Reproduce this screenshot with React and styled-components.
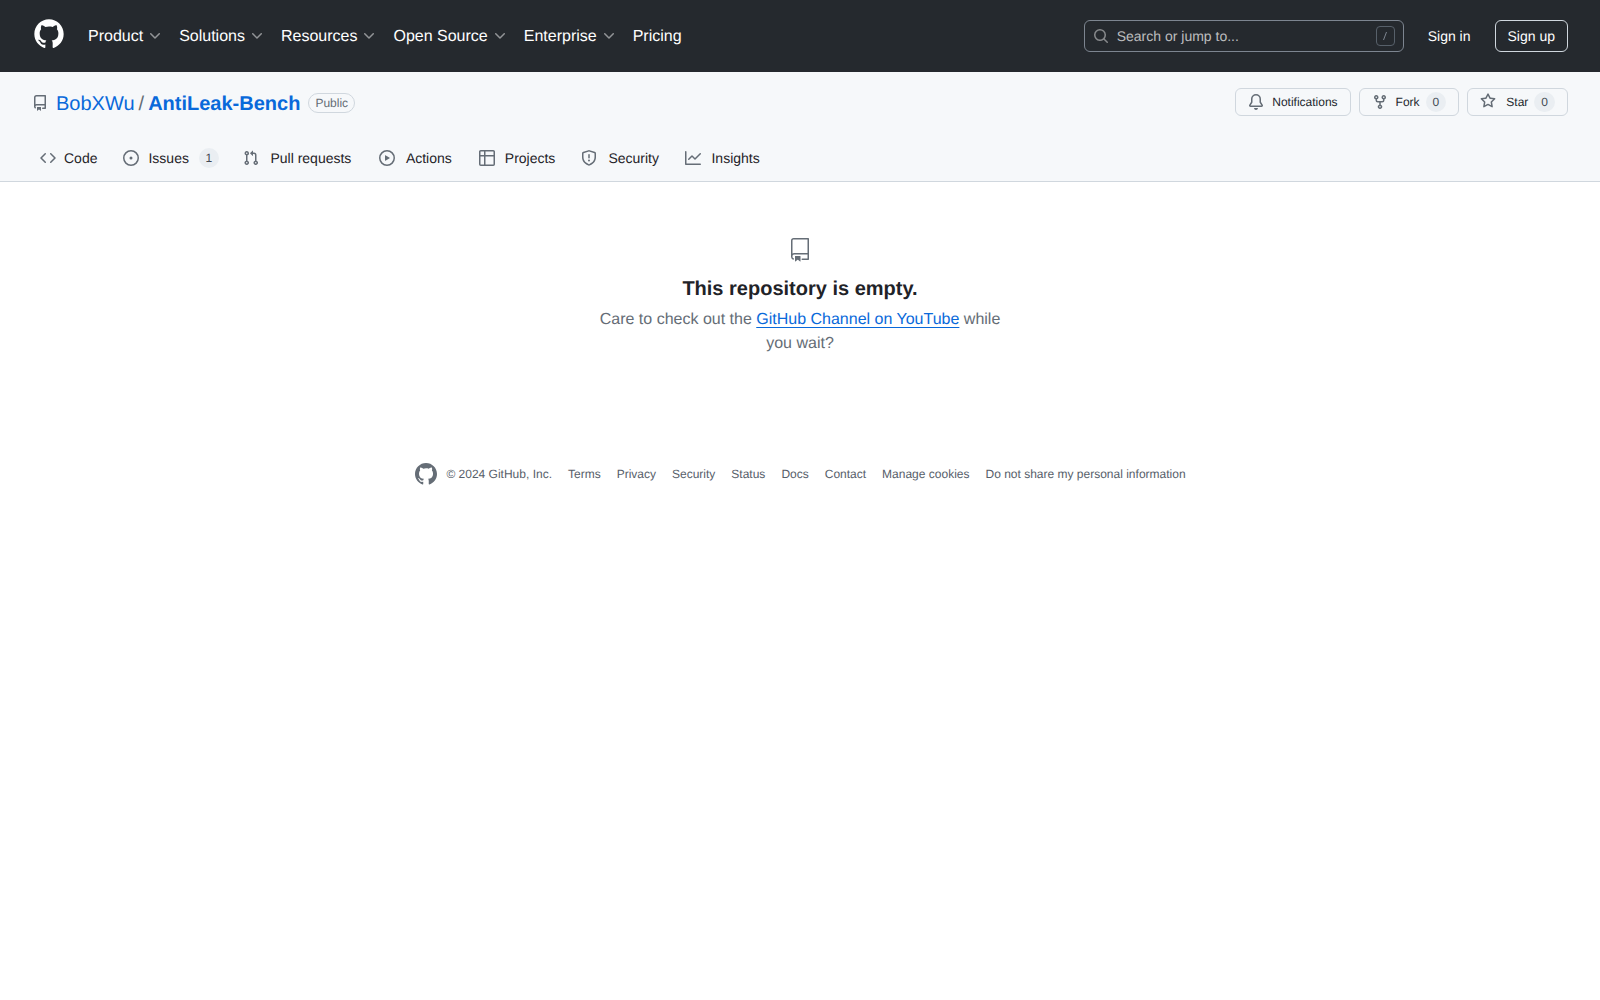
import React from "react";
import styled, { createGlobalStyle } from "styled-components";

const LOGO = "M12 1C5.923 1 1 5.923 1 12c0 4.867 3.149 8.979 7.521 10.436.55.096.756-.233.756-.522 0-.262-.013-1.128-.013-2.049-2.764.509-3.479-.674-3.699-1.292-.124-.317-.66-1.293-1.127-1.554-.385-.207-.936-.715-.014-.729.866-.014 1.485.797 1.691 1.128.99 1.663 2.571 1.196 3.204.907.096-.715.385-1.196.701-1.471-2.448-.275-5.005-1.224-5.005-5.432 0-1.196.426-2.186 1.128-2.956-.111-.275-.496-1.402.11-2.915 0 0 .921-.288 3.024 1.128a10.193 10.193 0 0 1 2.75-.371c.936 0 1.871.123 2.75.371 2.104-1.43 3.025-1.128 3.025-1.128.605 1.513.221 2.64.111 2.915.701.77 1.127 1.747 1.127 2.956 0 4.222-2.571 5.157-5.019 5.432.399.344.743 1.004.743 2.035 0 1.471-.014 2.654-.014 3.025 0 .289.206.632.756.522C19.851 20.979 23 16.854 23 12c0-6.077-4.922-11-11-11Z";

const P = {
  repo: "M2 2.5A2.5 2.5 0 0 1 4.5 0h8.75a.75.75 0 0 1 .75.75v12.5a.75.75 0 0 1-.75.75h-2.5a.75.75 0 0 1 0-1.5h1.75v-2h-8a1 1 0 0 0-.714 1.7.75.75 0 1 1-1.072 1.05A2.495 2.495 0 0 1 2 11.5Zm10.5-1h-8a1 1 0 0 0-1 1v6.708A2.486 2.486 0 0 1 4.5 9h8ZM5 12.25a.25.25 0 0 1 .25-.25h3.5a.25.25 0 0 1 .25.25v3.25a.25.25 0 0 1-.4.2l-1.45-1.087a.249.249 0 0 0-.3 0L5.4 15.7a.25.25 0 0 1-.4-.2Z",
  code: "m11.28 3.22 4.25 4.25a.75.75 0 0 1 0 1.06l-4.25 4.25a.749.749 0 0 1-1.275-.326.749.749 0 0 1 .215-.734L13.94 8l-3.72-3.72a.749.749 0 0 1 .326-1.275.749.749 0 0 1 .734.215Zm-6.56 0a.751.751 0 0 1 1.042.018.751.751 0 0 1 .018 1.042L2.06 8l3.72 3.72a.749.749 0 0 1-.326 1.275.749.749 0 0 1-.734-.215L.47 8.53a.75.75 0 0 1 0-1.06Z",
  issue: "M8 9.5a1.5 1.5 0 1 0 0-3 1.5 1.5 0 0 0 0 3Z M8 0a8 8 0 1 1 0 16A8 8 0 0 1 8 0ZM1.5 8a6.5 6.5 0 1 0 13 0 6.5 6.5 0 0 0-13 0Z",
  pull: "M1.5 3.25a2.25 2.25 0 1 1 3 2.122v5.256a2.251 2.251 0 1 1-1.5 0V5.372A2.25 2.25 0 0 1 1.5 3.25Zm5.677-.177L9.573.677A.25.25 0 0 1 10 .854V2.5h1A2.5 2.5 0 0 1 13.5 5v5.628a2.251 2.251 0 1 1-1.5 0V5a1 1 0 0 0-1-1h-1v1.646a.25.25 0 0 1-.427.177L7.177 3.427a.25.25 0 0 1 0-.354ZM3.75 2.5a.75.75 0 1 0 0 1.5.75.75 0 0 0 0-1.5Zm0 9.5a.75.75 0 1 0 0 1.5.75.75 0 0 0 0-1.5Zm8.25.75a.75.75 0 1 0 1.5 0 .75.75 0 0 0-1.5 0Z",
  play: "M8 0a8 8 0 1 1 0 16A8 8 0 0 1 8 0ZM1.5 8a6.5 6.5 0 1 0 13 0 6.5 6.5 0 0 0-13 0Zm4.879-2.773 4.264 2.559a.25.25 0 0 1 0 .428l-4.264 2.559A.25.25 0 0 1 6 10.559V5.442a.25.25 0 0 1 .379-.215Z",
  table: "M0 1.75C0 .784.784 0 1.75 0h12.5C15.216 0 16 .784 16 1.75v12.5A1.75 1.75 0 0 1 14.25 16H1.75A1.75 1.75 0 0 1 0 14.25ZM6.5 6.5v8h7.75a.25.25 0 0 0 .25-.25V6.5Zm8-1.5V1.75a.25.25 0 0 0-.25-.25H6.5V5Zm-13 1.5v7.75c0 .138.112.25.25.25H5v-8ZM5 5V1.5H1.75a.25.25 0 0 0-.25.25V5Z",
  shield: "M7.467.133a1.748 1.748 0 0 1 1.066 0l5.25 1.68A1.75 1.75 0 0 1 15 3.48V7c0 1.566-.32 3.182-1.303 4.682-.983 1.498-2.585 2.813-5.032 3.855a1.697 1.697 0 0 1-1.33 0c-2.447-1.042-4.049-2.357-5.032-3.855C1.32 10.182 1 8.566 1 7V3.48a1.75 1.75 0 0 1 1.217-1.667Zm.61 1.429a.25.25 0 0 0-.153 0l-5.25 1.68a.25.25 0 0 0-.174.238V7c0 1.358.275 2.666 1.057 3.86.784 1.194 2.121 2.34 4.366 3.297a.196.196 0 0 0 .154 0c2.245-.956 3.582-2.104 4.366-3.298C13.225 9.666 13.5 8.36 13.5 7V3.48a.251.251 0 0 0-.174-.237l-5.25-1.68ZM8.75 4.75v3a.75.75 0 0 1-1.5 0v-3a.75.75 0 0 1 1.5 0ZM9 10.5a1 1 0 1 1-2 0 1 1 0 0 1 2 0Z",
  graph: "M1.5 1.75V13.5h13.75a.75.75 0 0 1 0 1.5H.75a.75.75 0 0 1-.75-.75V1.75a.75.75 0 0 1 1.5 0Zm14.28 2.53-5.25 5.25a.75.75 0 0 1-1.06 0L7 7.06 4.28 9.78a.751.751 0 0 1-1.042-.018.751.751 0 0 1-.018-1.042l3.25-3.25a.75.75 0 0 1 1.06 0L10 7.94l4.72-4.72a.751.751 0 0 1 1.042.018.751.751 0 0 1 .018 1.042Z",
  bell: "M8 16a2 2 0 0 0 1.985-1.75c.017-.137-.097-.25-.235-.25h-3.5c-.138 0-.252.113-.235.25A2 2 0 0 0 8 16ZM3 5a5 5 0 0 1 10 0v2.947c0 .05.015.098.042.139l1.703 2.555A1.519 1.519 0 0 1 13.482 13H2.518a1.516 1.516 0 0 1-1.263-2.36l1.703-2.554A.255.255 0 0 0 3 7.947Zm5-3.5A3.5 3.5 0 0 0 4.5 5v2.947c0 .346-.102.683-.294.97l-1.703 2.556a.017.017 0 0 0-.003.01l.001.006c0 .002.002.004.004.006l.006.004.007.001h10.964l.007-.001.006-.004.004-.006.001-.007a.017.017 0 0 0-.003-.01l-1.703-2.554a1.745 1.745 0 0 1-.294-.97V5A3.5 3.5 0 0 0 8 1.5Z",
  fork: "M5 5.372v.878c0 .414.336.75.75.75h4.5a.75.75 0 0 0 .75-.75v-.878a2.25 2.25 0 1 1 1.5 0v.878a2.25 2.25 0 0 1-2.25 2.25h-1.5v2.128a2.251 2.251 0 1 1-1.5 0V8.5h-1.5A2.25 2.25 0 0 1 3.5 6.25v-.878a2.25 2.25 0 1 1 1.5 0ZM5 3.25a.75.75 0 1 0-1.5 0 .75.75 0 0 0 1.5 0Zm6.75.75a.75.75 0 1 0 0-1.5.75.75 0 0 0 0 1.5Zm-3 8.75a.75.75 0 1 0-1.5 0 .75.75 0 0 0 1.5 0Z",
  star: "M8 .25a.75.75 0 0 1 .673.418l1.882 3.815 4.21.612a.75.75 0 0 1 .416 1.279l-3.046 2.97.719 4.192a.751.751 0 0 1-1.088.791L8 12.347l-3.766 1.98a.75.75 0 0 1-1.088-.79l.72-4.194L.818 6.374a.75.75 0 0 1 .416-1.28l4.21-.611L7.327.668A.75.75 0 0 1 8 .25Zm0 2.445L6.615 5.5a.75.75 0 0 1-.564.41l-3.097.45 2.24 2.184a.75.75 0 0 1 .216.664l-.528 3.084 2.769-1.456a.75.75 0 0 1 .698 0l2.77 1.456-.53-3.084a.75.75 0 0 1 .216-.664l2.24-2.183-3.096-.45a.75.75 0 0 1-.564-.41L8 2.694Z",
  search: "M10.68 11.74a6 6 0 0 1-7.922-8.982 6 6 0 0 1 8.982 7.922l3.04 3.04a.749.749 0 0 1-.326 1.275.749.749 0 0 1-.734-.215ZM11.5 7a4.499 4.499 0 1 0-8.997 0A4.499 4.499 0 0 0 11.5 7Z",
  chevron: "M12.78 5.22a.749.749 0 0 1 0 1.06l-4.25 4.25a.749.749 0 0 1-1.06 0L3.22 6.28a.749.749 0 1 1 1.06-1.06L8 8.939l3.72-3.719a.749.749 0 0 1 1.06 0Z",
};
const REPO24 = "M3 2.75A2.75 2.75 0 0 1 5.75 0h14.5a.75.75 0 0 1 .75.75v20.5a.75.75 0 0 1-.75.75h-6a.75.75 0 0 1 0-1.5h5.25v-4H6A1.5 1.5 0 0 0 4.5 18v.75c0 .716.43 1.334 1.05 1.605a.75.75 0 0 1-.6 1.374A3.251 3.251 0 0 1 3 18.75ZM19.5 1.5H5.75c-.69 0-1.25.56-1.25 1.25v12.651A2.989 2.989 0 0 1 6 15h13.5Z M7 18.25a.25.25 0 0 1 .25-.25h5a.25.25 0 0 1 .25.25v5.01a.25.25 0 0 1-.397.201l-2.206-1.604a.25.25 0 0 0-.294 0L7.397 23.46a.25.25 0 0 1-.397-.2Z";

const Global = createGlobalStyle`
  html, body { margin: 0; padding: 0; background: #fff; }
  body { font-family: "Liberation Sans", Arial, sans-serif; font-size: 14px; line-height: 1.5; color: #1f2328; text-rendering: geometricPrecision; }
  * { box-sizing: border-box; }
  a { text-decoration: none; color: inherit; }
`;

const Icon = ({ name, size = 16, className }) => (
  <svg className={className} width={size} height={size} viewBox="0 0 16 16" fill="currentColor" aria-hidden="true">
    <path fillRule="evenodd" d={P[name]} />
  </svg>
);
const Mark = ({ size, className }) => (
  <svg className={className} width={size} height={size} viewBox="0 0 24 24" fill="currentColor" aria-hidden="true">
    <path d={LOGO} />
  </svg>
);
const BookIcon = ({ className }) => (
  <svg className={className} width="24" height="24" viewBox="0 0 24 24" fill="currentColor" aria-hidden="true">
    <path d={REPO24} />
  </svg>
);

const Header = styled.header`
  height: 72px;
  background: #25292e;
  padding: 0 32px;
  display: flex;
  align-items: center;
  color: #fff;
`;
const Logo = styled.a`
  display: flex;
  color: #fff;
  margin: -4px 15px 0 1px;
`;
const MainNav = styled.nav`
  display: flex;
  align-items: center;
  flex: 1;
  margin-top: 2px;
`;
const NavItem = styled.a`
  display: flex;
  align-items: center;
  font-size: 16px;
  line-height: 24px;
  padding: 0 8px;
  color: #fff;
`;
const NavChevron = styled(Icon)`
  margin-left: 4px;
  opacity: 0.5;
  margin-top: -3px;
`;
const Search = styled.div`
  width: 320px;
  height: 32px;
  border: 1px solid #7d8590;
  border-radius: 6px;
  display: flex;
  align-items: center;
  padding: 0 8px;
  color: rgba(255, 255, 255, 0.7);
`;
const SearchIcon = styled(Icon)`
  color: rgba(255, 255, 255, 0.45);
  margin-right: 8px;
`;
const SearchText = styled.span`
  flex: 1;
  font-size: 14px;
  padding-top: 1px;
`;
const SlashKey = styled.span`
  width: 19px;
  height: 20px;
  border: 1px solid #57606a;
  border-radius: 4px;
  color: #7d8590;
  display: flex;
  align-items: center;
  justify-content: center;
`;
const SignIn = styled.a`
  margin-left: 24px;
  font-size: 14px;
  color: #fff;
`;
const SignUp = styled.a`
  margin-left: 24px;
  height: 32px;
  padding: 0 12px;
  border: 1px solid #d0d7de;
  border-radius: 6px;
  display: flex;
  align-items: center;
  font-size: 14px;
  color: #fff;
`;

const RepoHead = styled.div`
  background: #f6f8fa;
  border-bottom: 1px solid #d0d7de;
  height: 110px;
  padding: 16px 32px 0;
`;
const TitleRow = styled.div`
  display: flex;
  align-items: center;
  height: 30px;
  margin-bottom: 16px;
`;
const RepoIcon = styled(Icon)`
  color: #656d76;
  margin-right: 8px;
`;
const Crumb = styled.a`
  font-size: 20px;
  line-height: 30px;
  margin-top: 1px;
  color: #0969da;
  font-weight: ${(p) => (p.$bold ? 600 : 400)};
`;
const Slashy = styled.span`
  font-size: 20px;
  margin-top: 1px;
  color: #656d76;
  margin-left: 4px;
  margin-right: 4px;
`;
const Label = styled.span`
  margin-left: 8px;
  font-size: 12px;
  font-weight: 500;
  line-height: 18px;
  color: #656d76;
  border: 1px solid #d0d7de;
  border-radius: 2em;
  padding: 0 6px;
`;
const Actions = styled.div`
  margin-left: auto;
  align-self: flex-start;
  display: flex;
  gap: 8px;
`;
const Btn = styled.a`
  height: 28px;
  padding: 0 12px;
  border: 1px solid #d0d7de;
  border-radius: 6px;
  display: flex;
  align-items: center;
  font-size: 12px;
  font-weight: 500;
  color: #24292f;
  background: #f6f8fa;
`;
const BtnIcon = styled(Icon)`
  color: #656d76;
  margin-right: ${(p) => p.$gap || 8}px;
  margin-top: ${(p) => p.$lift || 0}px;
`;
const BtnCount = styled.span`
  margin-left: ${(p) => p.$gap || 4}px;
  min-width: 20px;
  height: 20px;
  border-radius: 2em;
  background: #eaeef2;
  color: #424a53;
  font-size: 12px;
  line-height: 20px;
  text-align: center;
  padding: 0 7px;
`;
const Tabs = styled.nav`
  display: flex;
  align-items: center;
  height: 48px;
`;
const Tab = styled.a`
  display: flex;
  align-items: center;
  padding: 0 8px;
  margin-right: ${(p) => p.$after}px;
  font-size: 14px;
  line-height: 30px;
  color: #1f2328;
`;
const TabIcon = styled(Icon)`
  color: #656d76;
  margin-right: ${(p) => p.$gap}px;
`;
const TabCount = styled.span`
  margin-left: 10px;
  min-width: 20px;
  height: 20px;
  border-radius: 2em;
  background: #eaeef2;
  color: #424a53;
  font-size: 12px;
  font-weight: 500;
  line-height: 20px;
  text-align: center;
  padding: 0 6px;
`;

const Blank = styled.main`
  display: flex;
  flex-direction: column;
  align-items: center;
  padding-top: 56px;
  text-align: center;
`;
const BlankIcon = styled(BookIcon)`
  color: #656d76;
  margin-bottom: 12px;
`;
const BlankTitle = styled.h2`
  margin: 0 0 4px;
  font-size: 20px;
  line-height: 30px;
  font-weight: 600;
  color: #1f2328;
`;
const BlankText = styled.p`
  margin: 0;
  width: 416px;
  font-size: 16px;
  line-height: 24px;
  color: #656d76;
`;
const BlankLink = styled.a`
  color: #0969da;
  text-decoration: underline;
  text-underline-offset: 3px;
`;

const Footer = styled.footer`
  margin-top: 106px;
  display: flex;
  justify-content: center;
  align-items: center;
  font-size: 12px;
  color: #656d76;
  line-height: 18px;
`;
const FooterLogo = styled(Mark)`
  color: #656d76;
  margin-right: 8px;
`;
const FooterItem = styled.a`
  margin-right: 16px;
  color: #57606a;
  &:last-child { margin-right: 0; }
`;

const nav = [
  ["Product", true], ["Solutions", true], ["Resources", true],
  ["Open Source", true], ["Enterprise", true], ["Pricing", false],
];
const tabs = [
  { icon: "code", label: "Code", gap: 8, after: 10 },
  { icon: "issue", label: "Issues", count: "1", gap: 9, after: 8 },
  { icon: "pull", label: "Pull requests", gap: 11.5, after: 11.5 },
  { icon: "play", label: "Actions", gap: 11, after: 11 },
  { icon: "table", label: "Projects", gap: 10, after: 10 },
  { icon: "shield", label: "Security", gap: 11, after: 10 },
  { icon: "graph", label: "Insights", gap: 10.5, after: 0 },
];
const foot = ["Terms", "Privacy", "Security", "Status", "Docs", "Contact", "Manage cookies", "Do not share my personal information"];

export default function App() {
  return (
    <>
      <Global />
      <Header>
        <Logo href="#"><Mark size={32} /></Logo>
        <MainNav>
          {nav.map(([label, chev]) => (
            <NavItem key={label} href="#">
              {label}
              {chev && <NavChevron name="chevron" size={16} />}
            </NavItem>
          ))}
        </MainNav>
        <Search>
          <SearchIcon name="search" />
          <SearchText>Search or jump to...</SearchText>
          <SlashKey>
            <svg width="8" height="10" viewBox="0 0 8 10" aria-hidden="true">
              <path d="M5.5 1 2.5 9" stroke="currentColor" strokeWidth="1" fill="none" />
            </svg>
          </SlashKey>
        </Search>
        <SignIn href="#">Sign in</SignIn>
        <SignUp href="#">Sign up</SignUp>
      </Header>
      <RepoHead>
        <TitleRow>
          <RepoIcon name="repo" />
          <Crumb href="#">BobXWu</Crumb>
          <Slashy>/</Slashy>
          <Crumb href="#" $bold>AntiLeak-Bench</Crumb>
          <Label>Public</Label>
          <Actions>
            <Btn href="#"><BtnIcon name="bell" />Notifications</Btn>
            <Btn href="#"><BtnIcon name="fork" />Fork<BtnCount $gap={6}>0</BtnCount></Btn>
            <Btn href="#"><BtnIcon name="star" $gap={10} $lift={-3} />Star<BtnCount $gap={6}>0</BtnCount></Btn>
          </Actions>
        </TitleRow>
        <Tabs>
          {tabs.map((t) => (
            <Tab key={t.label} href="#" $after={t.after}>
              <TabIcon name={t.icon} $gap={t.gap} />
              {t.label}
              {t.count && <TabCount>{t.count}</TabCount>}
            </Tab>
          ))}
        </Tabs>
      </RepoHead>
      <Blank>
        <BlankIcon />
        <BlankTitle>This repository is empty.</BlankTitle>
        <BlankText>
          Care to check out the <BlankLink href="#">GitHub Channel on YouTube</BlankLink> while you wait?
        </BlankText>
      </Blank>
      <Footer>
        <FooterLogo size={24} />
        <FooterItem>© 2024 GitHub, Inc.</FooterItem>
        {foot.map((f) => <FooterItem key={f} href="#">{f}</FooterItem>)}
      </Footer>
    </>
  );
}
